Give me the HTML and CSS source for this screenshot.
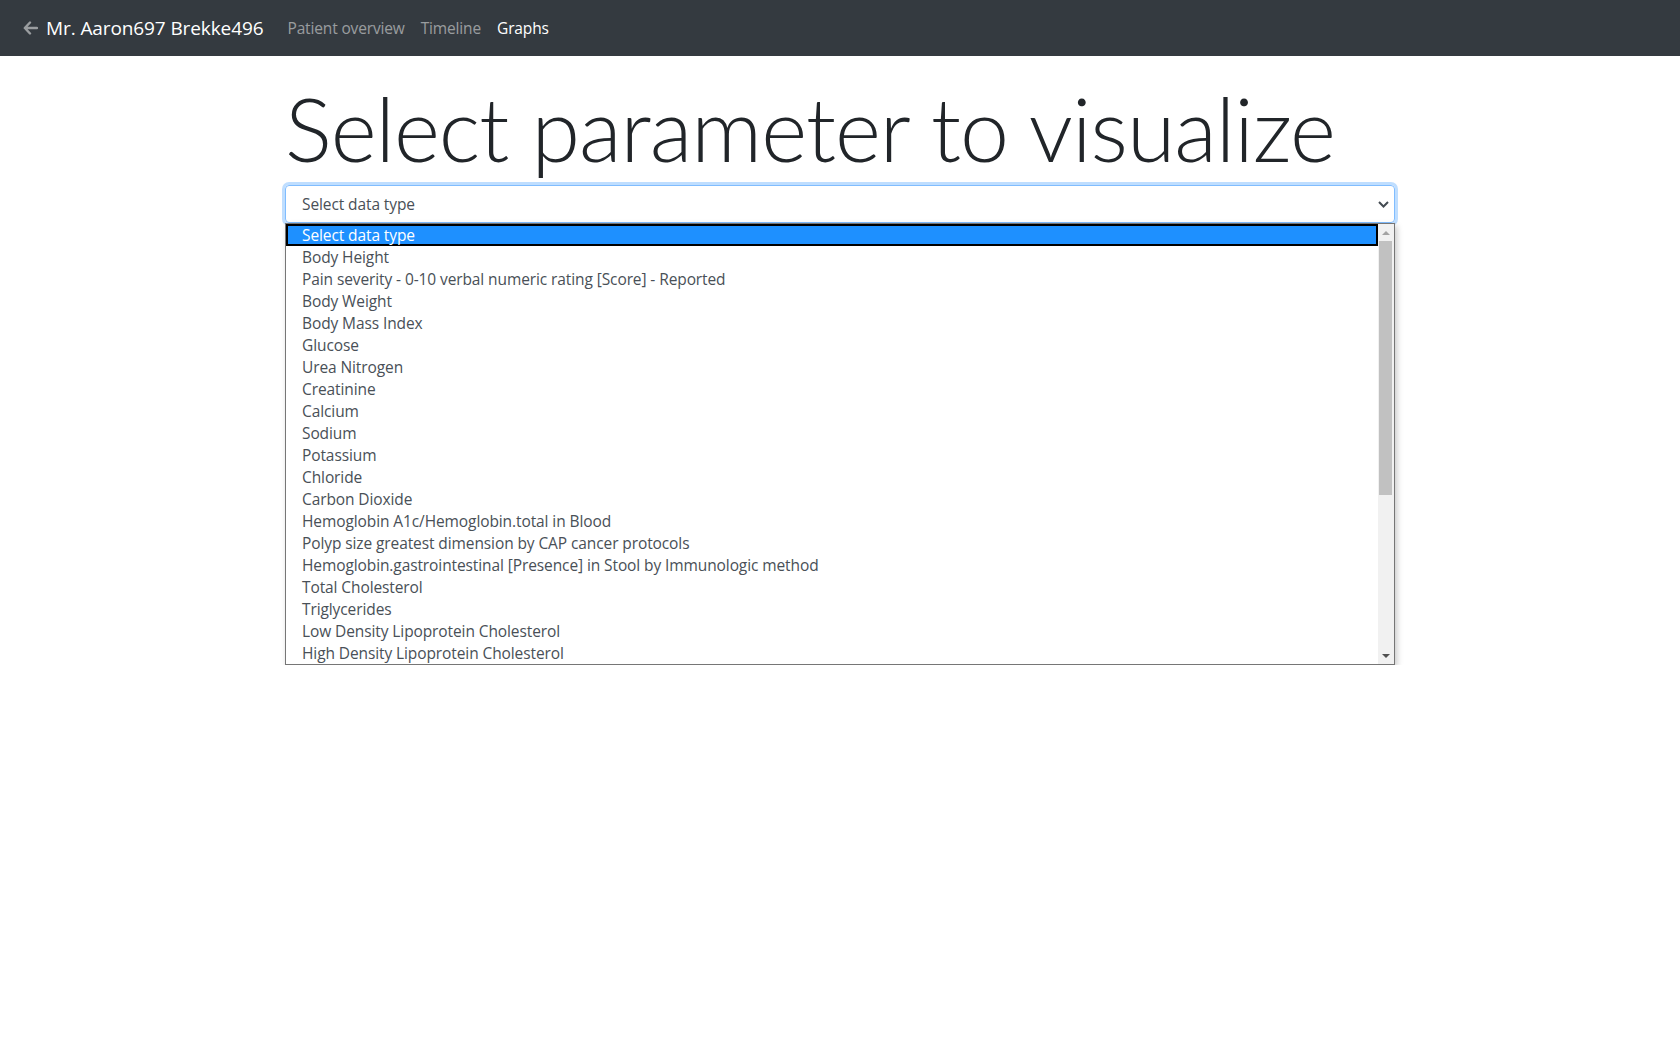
FILE: index.html
```html
<!DOCTYPE html>
<html lang="en">
<head>
<meta charset="utf-8">
<title>Graphs</title>
<link rel="stylesheet" href="styles.css">
</head>
<body>
<nav class="navbar">
  <a class="brand" href="#">
    <svg class="back" width="15" height="14" viewBox="0 0 15 14"><path d="M7 1.5 L1.8 7 L7 12.5 M2 7 H14" fill="none" stroke="currentColor" stroke-width="2.4" stroke-linecap="round" stroke-linejoin="round"/></svg>
    <span class="brand-text">Mr. Aaron697 Brekke496</span>
  </a>
  <ul class="nav">
    <li><a class="nav-link" href="#">Patient overview</a></li>
    <li><a class="nav-link" href="#">Timeline</a></li>
    <li><a class="nav-link active" href="#">Graphs</a></li>
  </ul>
</nav>
<main class="container">
  <h1 class="display">Select parameter to visualize</h1>
  <div class="picker">
    <div class="picker-field">
      <span class="picker-value">Select data type</span>
      <svg class="chevron" width="11" height="7" viewBox="0 0 11 7"><path d="M1 1 L5.5 5.5 L10 1" fill="none" stroke="currentColor" stroke-width="2"/></svg>
    </div>
    <div class="picker-list">
      <ul class="items">
        <li class="item current">Select data type</li>
        <li class="item">Body Height</li>
        <li class="item">Pain severity - 0-10 verbal numeric rating [Score] - Reported</li>
        <li class="item">Body Weight</li>
        <li class="item">Body Mass Index</li>
        <li class="item">Glucose</li>
        <li class="item">Urea Nitrogen</li>
        <li class="item">Creatinine</li>
        <li class="item">Calcium</li>
        <li class="item">Sodium</li>
        <li class="item">Potassium</li>
        <li class="item">Chloride</li>
        <li class="item">Carbon Dioxide</li>
        <li class="item">Hemoglobin A1c/Hemoglobin.total in Blood</li>
        <li class="item">Polyp size greatest dimension by CAP cancer protocols</li>
        <li class="item">Hemoglobin.gastrointestinal [Presence] in Stool by Immunologic method</li>
        <li class="item">Total Cholesterol</li>
        <li class="item">Triglycerides</li>
        <li class="item">Low Density Lipoprotein Cholesterol</li>
        <li class="item">High Density Lipoprotein Cholesterol</li>
      </ul>
      <div class="sbar">
        <div class="sbar-arrow up"></div>
        <div class="sbar-track"><div class="sbar-thumb"></div></div>
        <div class="sbar-arrow down"></div>
      </div>
    </div>
  </div>
</main>
</body>
</html>
```
FILE: styles.css
```css
* { box-sizing: border-box; }
html, body { margin: 0; padding: 0; }
body {
  font-family: "Open Sans", "Noto Sans", sans-serif;
  font-size: 16px;
  color: #212529;
  background: #fff;
}
a { text-decoration: none; }
.navbar {
  height: 56px;
  background: #343a40;
  display: flex;
  align-items: center;
  padding: 0 16px 0 23px;
}
.brand {
  display: flex;
  align-items: center;
  color: #fff;
  margin-right: 16px;
}
.back { color: rgba(255,255,255,0.5); margin-right: 8px; }
.brand-text { font-size: 19px; letter-spacing: -0.1px; }
.nav { list-style: none; margin: 0; padding: 0; display: flex; }
.nav-link {
  display: block;
  padding: 8px 8px;
  color: rgba(255,255,255,0.5);
  font-size: 15.5px;
  letter-spacing: -0.15px;
}
.nav-link.active { color: #fff; }
.container {
  width: 1140px;
  margin: 0 auto;
  padding: 0 15px;
}
.display {
  font-family: "Lato", "Open Sans", sans-serif;
  font-size: 88px;
  font-weight: 300;
  line-height: 110px;
  margin: 17px 0 2px;
  letter-spacing: -1px;
  color: #212529;
  white-space: nowrap;
}
.picker-field {
  height: 38px;
  border: 1px solid #80bdff;
  border-radius: 4px;
  box-shadow: 0 0 0 3px rgba(0,123,255,0.25);
  display: flex;
  align-items: center;
  justify-content: space-between;
  padding: 0 5px 0 16px;
  color: #495057;
  font-size: 15.5px;
  letter-spacing: -0.1px;
}
.chevron { color: #444b52; }
.picker-list {
  height: 442px;
  border: 1px solid #767676;
  background: #fff;
  display: flex;
  box-shadow: 2px 3px 6px rgba(0,0,0,0.22);
}
.items {
  list-style: none;
  margin: 0;
  padding: 0;
  flex: 1;
}
.item {
  height: 22px;
  line-height: 22px;
  padding-left: 16px;
  color: #495057;
  font-size: 15.5px;
  letter-spacing: -0.1px;
  white-space: nowrap;
}
.item.current {
  background: #1e90ff;
  color: #fff;
  box-shadow: inset 0 0 0 2px #000;
}
.sbar {
  width: 16px;
  background: #f1f1f1;
  display: flex;
  flex-direction: column;
}
.sbar-arrow {
  height: 17px;
  display: flex;
  align-items: center;
  justify-content: center;
}
.sbar-arrow::before {
  content: "";
  border-left: 4px solid transparent;
  border-right: 4px solid transparent;
}
.sbar-arrow.up::before { border-bottom: 4px solid #a3a3a3; }
.sbar-arrow.down::before { border-top: 4px solid #505050; }
.sbar-track { flex: 1; padding: 0 2px 0 1px; }
.sbar-thumb { height: 254px; background: #c1c1c1; }
```
